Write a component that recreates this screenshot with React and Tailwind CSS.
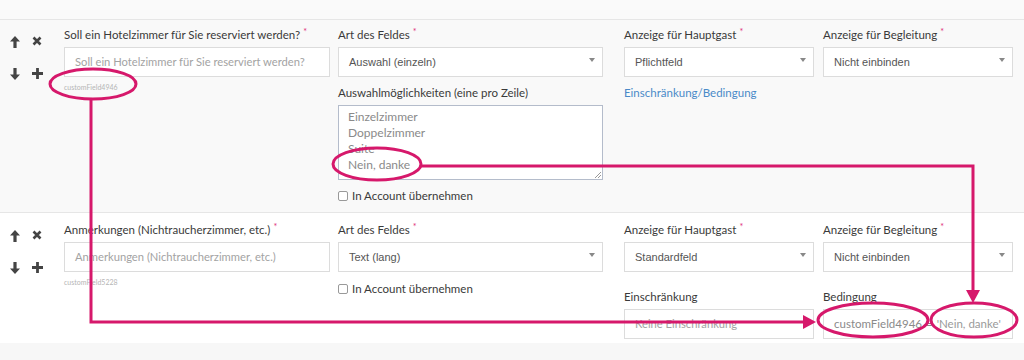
const PINK = "#d6186b";

const Star = () => <span className="text-[#e0307a] text-[9px] align-top ml-[3px] relative top-[-3px]">*</span>;

const Label = ({ children, required }) => (
  <div className="h-[16px] leading-[16px] text-[11.5px] text-[#3a3a3a] mb-[4px] whitespace-nowrap">
    {children}
    {required && <Star />}
  </div>
);

const Input = ({ placeholder }) => (
  <div className="h-[30px] bg-white border border-[#dcdcdc] flex items-center px-[10px] text-[11.2px] text-[#a3a3a3] whitespace-nowrap overflow-hidden">
    {placeholder}
  </div>
);

const Select = ({ value }) => (
  <div className="h-[30px] bg-white border border-[#dcdcdc] flex items-center justify-between pl-[10px] pr-[7px] text-[11px] text-[#555] font-['Liberation_Sans',Arial,sans-serif]">
    <span>{value}</span>
    <svg width="6" height="4" viewBox="0 0 6 4" className="mb-[4px]">
      <path d="M0 0h6L3 4z" fill="#888" />
    </svg>
  </div>
);

const Checkbox = ({ label }) => (
  <div className="flex items-center gap-[4px] text-[11.5px] text-[#3a3a3a] h-[16px]">
    <span className="w-[10px] h-[10px] border border-[#999] rounded-[2px] bg-white" />
    {label}
  </div>
);

const Icons = ({ top }) => (
  <div className={`w-[64px] pl-[10px] shrink-0 ${top}`}>
    <div className="grid grid-cols-[22px_16px] gap-y-[20px] text-[#444]">
      <svg width="10" height="12" viewBox="0 0 10 12"><path d="M5 0L10 5.5H6.6V12H3.4V5.5H0z" fill="#444" /></svg>
      <svg width="10" height="10" viewBox="0 0 10 10"><path d="M1.5 1.5l7 7M8.5 1.5l-7 7" stroke="#444" strokeWidth="2.6" /></svg>
      <svg width="10" height="12" viewBox="0 0 10 12"><path d="M5 12L10 6.5H6.6V0H3.4V6.5H0z" fill="#444" /></svg>
      <svg width="11" height="11" viewBox="0 0 11 11"><path d="M5.5 0v11M0 5.5h11" stroke="#444" strokeWidth="2.8" /></svg>
    </div>
  </div>
);

function Overlay() {
  const s = { stroke: PINK, strokeWidth: 3, fill: "none" };
  return (
    <svg className="absolute inset-0 pointer-events-none" width="1024" height="360" viewBox="0 0 1024 360">
      <ellipse cx="93" cy="84" rx="43" ry="15" {...s} />
      <path d="M91 99V322H804" {...s} />
      <path d="M816 322L803 315V329z" fill={PINK} />
      <ellipse cx="377" cy="164" rx="44" ry="16" {...s} />
      <path d="M421 166H973V292" {...s} />
      <path d="M973 303L966 290H980z" fill={PINK} />
      <ellipse cx="873" cy="320" rx="55" ry="17" {...s} />
      <ellipse cx="974" cy="320" rx="43" ry="17" {...s} />
    </svg>
  );
}

export default function App() {
  return (
    <div className="relative w-[1024px] h-[360px] overflow-hidden bg-[#f7f7f7] font-['Lato','Open_Sans',sans-serif]">
      <div className="h-[20px] bg-[#fafafa] border-b border-[#e6e6e6]" />
      {/* row 1 */}
      <div className="flex bg-[#f9f9f9] border-b border-[#e6e6e6] h-[193px] pt-[7px]">
        <Icons top="pt-[9px]" />
        <div className="w-[266px]">
          <Label required>Soll ein Hotelzimmer für Sie reserviert werden?</Label>
          <Input placeholder="Soll ein Hotelzimmer für Sie reserviert werden?" />
          <div className="text-[7px] text-[#b5b5b5] mt-[5px]">customField4946</div>
        </div>
        <div className="w-[265px] ml-[8px]">
          <Label required>Art des Feldes</Label>
          <Select value="Auswahl (einzeln)" />
          <div className="mt-[8px]">
            <Label>Auswahlmöglichkeiten (eine pro Zeile)</Label>
          </div>
          <div className="relative h-[75px] bg-white border border-[#b4bccb] px-[9px] pt-[3px] text-[12px] leading-[16px] text-[#8a8a8a]">
            <div>Einzelzimmer</div>
            <div>Doppelzimmer</div>
            <div>Suite</div>
            <div>Nein, danke</div>
            <svg className="absolute right-[1px] bottom-[1px]" width="7" height="7" viewBox="0 0 7 7">
              <path d="M7 1L1 7M7 4L4 7" stroke="#999" strokeWidth="1" />
            </svg>
          </div>
          <div className="mt-[8px]">
            <Checkbox label="In Account übernehmen" />
          </div>
        </div>
        <div className="w-[190px] ml-[21px]">
          <Label required>Anzeige für Hauptgast</Label>
          <Select value="Pflichtfeld" />
          <div className="mt-[8px] text-[11.5px] h-[16px] leading-[16px] text-[#4a8ac8]">Einschränkung/Bedingung</div>
        </div>
        <div className="w-[190px] ml-[9px]">
          <Label required>Anzeige für Begleitung</Label>
          <Select value="Nicht einbinden" />
        </div>
      </div>
      {/* row 2 */}
      <div className="flex bg-white h-[130px] pt-[9px]">
        <Icons top="pt-[8px]" />
        <div className="w-[266px]">
          <Label required>Anmerkungen (Nichtraucherzimmer, etc.)</Label>
          <Input placeholder="Anmerkungen (Nichtraucherzimmer, etc.)" />
          <div className="text-[7px] text-[#b5b5b5] mt-[5px]">customField5228</div>
        </div>
        <div className="w-[265px] ml-[8px]">
          <Label required>Art des Feldes</Label>
          <Select value="Text (lang)" />
          <div className="mt-[9px]">
            <Checkbox label="In Account übernehmen" />
          </div>
        </div>
        <div className="w-[190px] ml-[21px]">
          <Label required>Anzeige für Hauptgast</Label>
          <Select value="Standardfeld" />
          <div className="mt-[17px]">
            <Label>Einschränkung</Label>
          </div>
          <Input placeholder="Keine Einschränkung" />
        </div>
        <div className="w-[190px] ml-[9px]">
          <Label required>Anzeige für Begleitung</Label>
          <Select value="Nicht einbinden" />
          <div className="mt-[17px]">
            <Label>Bedingung</Label>
          </div>
          <div className="h-[30px] bg-white border border-[#dcdcdc] flex items-center pl-[10px] text-[11.5px] text-[#8a8a8a] whitespace-nowrap overflow-hidden">
            <span>customField4946</span>
            <span className="ml-[4px]">=</span>
            <span className="ml-[4px] text-[#9a9a9a]">'Nein, danke'</span>
          </div>
        </div>
      </div>
      <Overlay />
    </div>
  );
}
